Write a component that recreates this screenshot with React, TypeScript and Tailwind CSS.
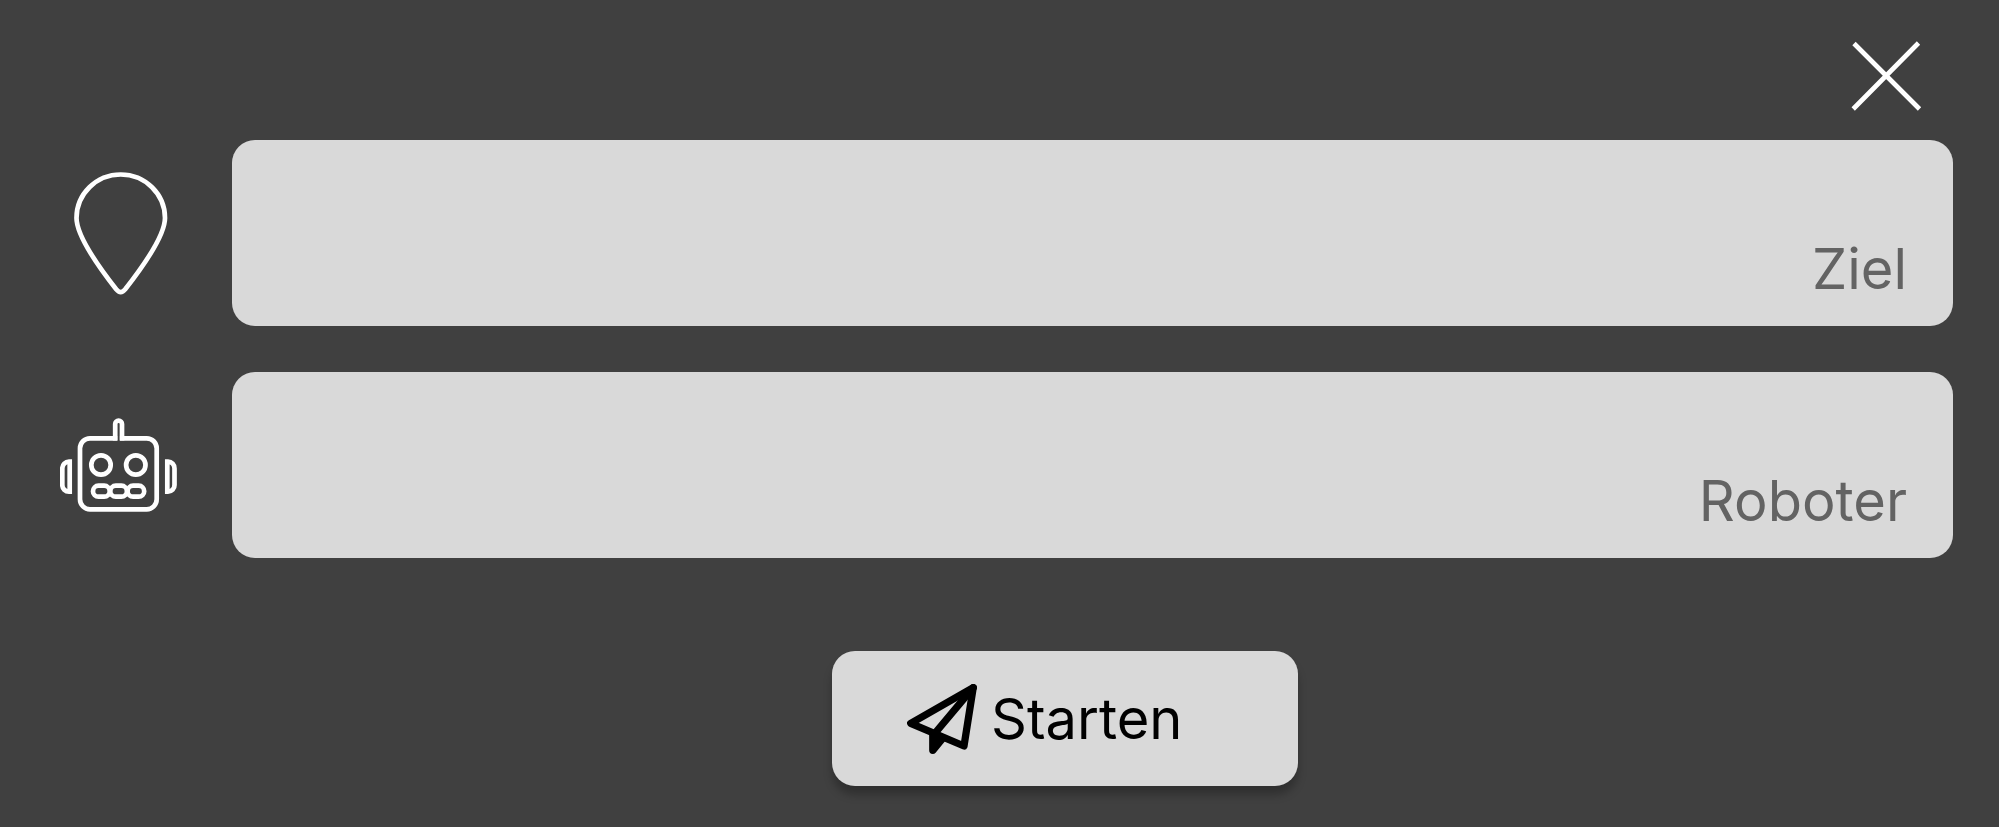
import type { ReactNode } from "react";

function CloseIcon() {
  return (
    <svg viewBox="0 0 70 70" className="size-[70px] overflow-visible" fill="none" stroke="currentColor" strokeWidth="4.7" aria-hidden="true">
      <path d="M3 1.500 68.500 67M2.200 67 67.500 1" />
    </svg>
  );
}

function PinIcon() {
  return (
    <svg viewBox="0 0 120 126" className="w-[120px] shrink-0" fill="none" stroke="currentColor" strokeWidth="4.7" aria-hidden="true">
      <path d="M60.7 4.5C36.3 4.5 16.5 24 16.5 48C16.5 65 38 96 56.2 119.3Q60.7 124.8 65.2 119.3C83.4 96 105 65 105 48C105 24 85.1 4.5 60.7 4.5Z" />
    </svg>
  );
}

function RobotIcon() {
  return (
    <svg viewBox="0 0 120 98" className="w-[120px] shrink-0" fill="none" stroke="currentColor" strokeWidth="4.7" aria-hidden="true">
      <path d="M57.3 22.3H30a10 10 0 0 0-10 10V83.300a10 10 0 0 0 10 10H86.700a10 10 0 0 0 10-10V32.300a10 10 0 0 0-10-10H59.900" />
      <path d="M55.200 24.600V8a3.400 3.400 0 0 1 6.800 0V24.600" />
      <path d="M9.700 45.700H9a6.700 6.700 0 0 0-6.700 6.700V69a6.700 6.700 0 0 0 6.700 6.700h.7z" />
      <path d="M107.300 45.700h.7a6.500 6.500 0 0 1 6.500 6.700V69a6.500 6.500 0 0 1-6.500 6.700h-.7z" />
      <circle cx="41" cy="49" r="9.7" />
      <circle cx="75.8" cy="49" r="9.7" />
      <rect x="33" y="69.7" width="16.7" height="11" rx="5.5" />
      <rect x="50.3" y="69.7" width="16.6" height="11" rx="5.5" />
      <rect x="67.6" y="69.7" width="16.6" height="11" rx="5.5" />
    </svg>
  );
}

function PlaneIcon() {
  return (
    <svg viewBox="0 0 70 70" className="size-[70px] shrink-0" fill="none" stroke="currentColor" strokeWidth="7.3" strokeLinejoin="round" strokeLinecap="round" aria-hidden="true">
      <path d="M66.200 3.700 3.700 39.300 57 62Z" />
      <path d="M66.200 3.700 27.300 50" />
      <path d="M25.800 50V66.300L36 54Z" fill="currentColor" />
    </svg>
  );
}

function Field({ id, label, icon }: { id: string; label: string; icon: ReactNode }) {
  return (
    <div className="flex items-center gap-[52px]">
      {icon}
      <div className="flex h-[186px] min-w-0 flex-1 flex-col rounded-[23px] bg-[#d9d9d9] px-[46px] pb-[23px] focus-within:ring-4 focus-within:ring-white/40">
        <input id={id} type="text" className="min-h-0 w-full flex-1 bg-transparent text-[56px] text-black outline-none" />
        <label htmlFor={id} className="text-right text-[56px] leading-[68px] text-[#636363]">
          {label}
        </label>
      </div>
    </div>
  );
}

export default function App() {
  return (
    <main className="min-h-screen bg-[#404040] font-['Inter','Liberation_Sans',sans-serif] text-white">
      <header className="flex justify-end pt-[42px] pr-[78px]">
        <button type="button" aria-label="Schließen" className="cursor-pointer">
          <CloseIcon />
        </button>
      </header>
      <form className="pt-7" onSubmit={(event) => event.preventDefault()}>
        <div className="flex flex-col gap-[46px] pr-[46px] pl-[60px]">
          <Field id="ziel" label="Ziel" icon={<PinIcon />} />
          <Field id="roboter" label="Roboter" icon={<RobotIcon />} />
        </div>
        <div className="flex justify-center pt-[93px] pb-10 pl-[131px]">
          <button
            type="submit"
            className="flex h-[135px] w-[466px] cursor-pointer items-center gap-[14px] rounded-[23px] bg-[#d9d9d9] pl-[75px] text-[56px] leading-[68px] text-black shadow-[0_9px_9px_rgba(0,0,0,0.25)]"
          >
            <PlaneIcon />
            Starten
          </button>
        </div>
      </form>
    </main>
  );
}
